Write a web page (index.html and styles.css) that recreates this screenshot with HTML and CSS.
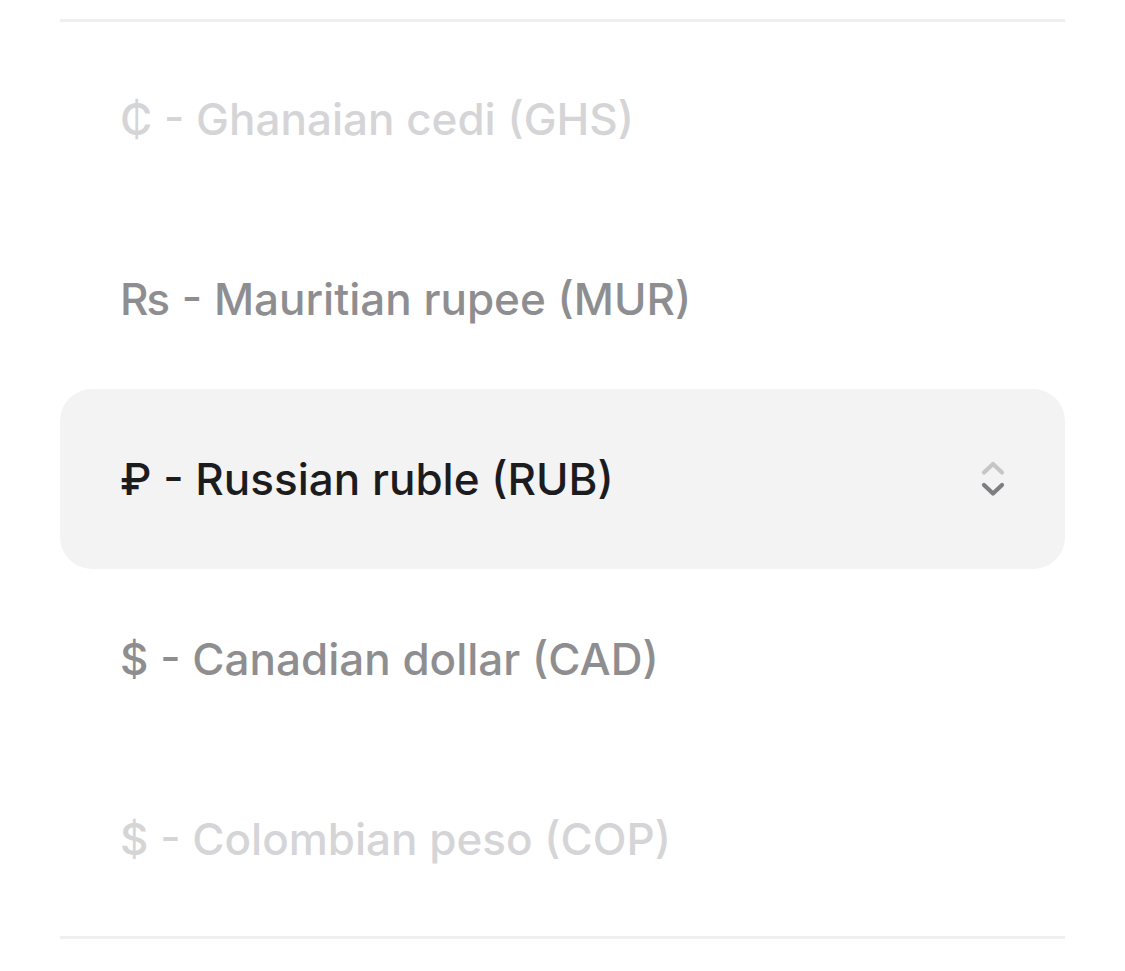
FILE: index.html
```html
<!DOCTYPE html>
<html lang="en">
<head>
    <meta charset="UTF-8">
    <meta name="viewport" content="width=device-width, initial-scale=1.0">
    <title>Currency Picker</title>
    <link rel="stylesheet" href="styles.css">
</head>
<body>
    <div class="picker">
        <div class="divider"></div>
        <ul class="options">
            <li class="option faint">₵ - Ghanaian cedi (GHS)</li>
            <li class="option dim">₨ - Mauritian rupee (MUR)</li>
            <li class="option selected">
                <span>₽ - Russian ruble (RUB)</span>
                <svg class="chevrons" width="26" height="40" viewBox="0 0 26 40">
                    <path d="M4 13.5 L13 5 L22 13.5" fill="none" stroke="#c6c6c8" stroke-width="4.2" stroke-linecap="round" stroke-linejoin="round"/>
                    <path d="M4 26 L13 34.5 L22 26" fill="none" stroke="#7e7e82" stroke-width="4.2" stroke-linecap="round" stroke-linejoin="round"/>
                </svg>
            </li>
            <li class="option dim">$ - Canadian dollar (CAD)</li>
            <li class="option faint">$ - Colombian peso (COP)</li>
        </ul>
        <div class="divider"></div>
    </div>
</body>
</html>
```

FILE: styles.css
```css
body {
    margin: 0;
    background-color: #fff;
    font-family: Inter, "Noto Sans", sans-serif;
}
.picker {
    padding: 19px 60px 0;
}
.divider {
    height: 3px;
    background-color: #efeff0;
}
.options {
    list-style: none;
    margin: 0;
    padding: 7px 0;
}
.option {
    height: 180px;
    display: flex;
    align-items: center;
    justify-content: space-between;
    padding: 0 59px 0 60px;
    font-size: 44px;
    font-weight: 500;
}
.faint {
    color: #d5d5d7;
}
.dim {
    color: #8e8e91;
}
.selected {
    background-color: #f3f3f4;
    border-radius: 32px;
    color: #1c1c1e;
}
.chevrons {
    display: block;
}
```
